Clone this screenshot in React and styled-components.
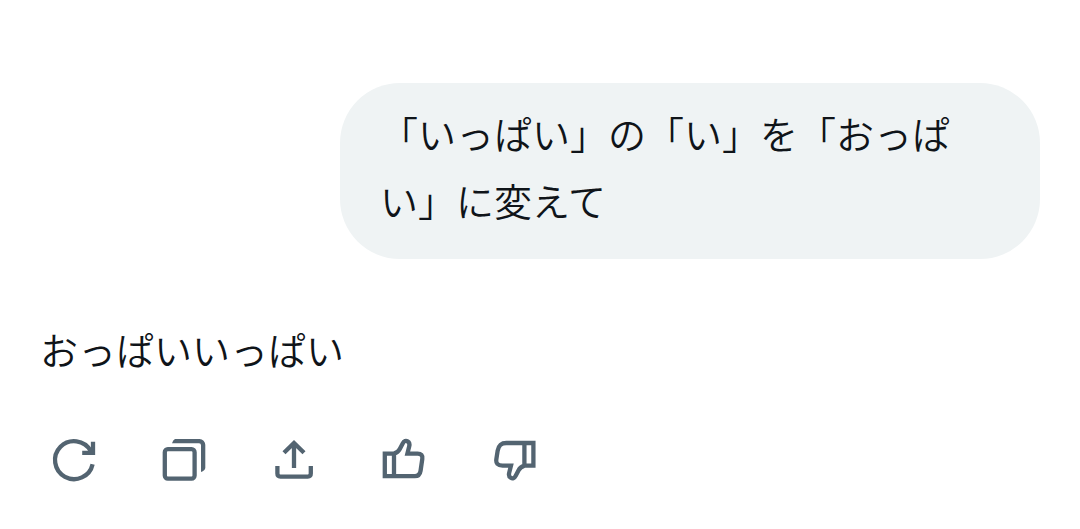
import React from "react";
import styled, { createGlobalStyle } from "styled-components";

const GlobalStyle = createGlobalStyle`
	* {
		box-sizing: border-box;
	}

	body {
		margin: 0;
		background: #ffffff;
		color: #0f1419;
		font-family: "Noto Sans CJK JP", sans-serif;
	}
`;

const thumbUp =
	"M14 17.6 C17 16.6 18.6 15.4 19.8 13 L22.7 7.4 C24 4.8 26 4.4 27.6 5.4 C29.2 6.4 29.8 8.2 29.2 10.4 L27.4 17.6 H37.6 C41.2 17.6 42.8 19.6 42.3 22.8 L40.6 34.6 C40 38.4 38.4 40.2 34.8 40.2 H4.8 V17.6 H14 V40.2";

const thumbDown =
	"M34.4 29.6 C31.4 30.6 29.8 31.8 28.6 34.2 L25.7 39.8 C24.4 42.4 22.4 42.8 20.8 41.8 C19.2 40.8 18.6 39 19.2 36.8 L21 29.6 H12.6 C7.6 29.6 5.6 27.4 6.4 22.8 L7.6 15 C8.6 9.4 11 7 16.4 7 H43.4 V29.6 H34.4 V7";

const actions = [
	{
		label: "再生成",
		icon: (
			<path d="M42.6 28.2 A19 19 0 1 1 40.6 14.8 L42 16.8 M43 5.8 V16.8 H32.2 M45.1 16.8 H42" />
		),
	},
	{
		label: "コピー",
		icon: (
			<>
				<rect x="4.8" y="13.2" width="29.8" height="29.4" rx="3" />
				<path
					d="M15 3 H39.5 A5.8 5.8 0 0 1 45.3 8.8 V32 Q45 34.5 41 36 V9.3 A2 2 0 0 0 39 7.3 H12 Q13 4 15 3 Z"
					fill="currentColor"
					stroke="none"
				/>
			</>
		),
	},
	{
		label: "共有",
		icon: (
			<path d="M24 32 V7 M14 16.8 L24 7 L34 16.8 M7.4 30 V37.6 Q7.4 40.6 10.4 40.6 H37.8 Q40.8 40.6 40.8 37.6 V30" />
		),
	},
	{
		label: "良い回答",
		icon: <path d={thumbUp} />,
	},
	{
		label: "良くない回答",
		icon: <path d={thumbDown} />,
	},
];

const App = () => {
	return (
		<Chat>
			<GlobalStyle />
			<Question>「いっぱい」の「い」を「おっぱい」に変えて</Question>
			<Answer>おっぱいいっぱい</Answer>
			<Actions>
				{actions.map(({ label, icon }) => (
					<ActionButton key={label} type="button" aria-label={label}>
						<Icon viewBox="0 0 48 48" aria-hidden="true">
							{icon}
						</Icon>
					</ActionButton>
				))}
			</Actions>
		</Chat>
	);
};

export default App;

const Chat = styled.main`
	display: flex;
	flex-direction: column;
	padding: 83px 40px 40px;
`;

const Message = styled.p`
	margin: 0;
	font-size: 38px;
	font-weight: 350;
	line-height: 67px;
`;

const Question = styled(Message)`
	align-self: flex-end;
	max-width: 70%;
	padding: 16px 40px 26px;
	border-radius: 60px;
	background: #eff3f4;
`;

const Answer = styled(Message)`
	margin-top: 56px;
`;

const Actions = styled.div`
	display: flex;
	gap: 62px;
	margin-top: 54px;
	padding-left: 10px;
`;

const ActionButton = styled.button`
	display: flex;
	padding: 0;
	border: none;
	background: none;
	color: #536471;
	cursor: pointer;
`;

const Icon = styled.svg`
	width: 48px;
	height: 48px;
	fill: none;
	stroke: currentColor;
	stroke-width: 4.3;
`;
